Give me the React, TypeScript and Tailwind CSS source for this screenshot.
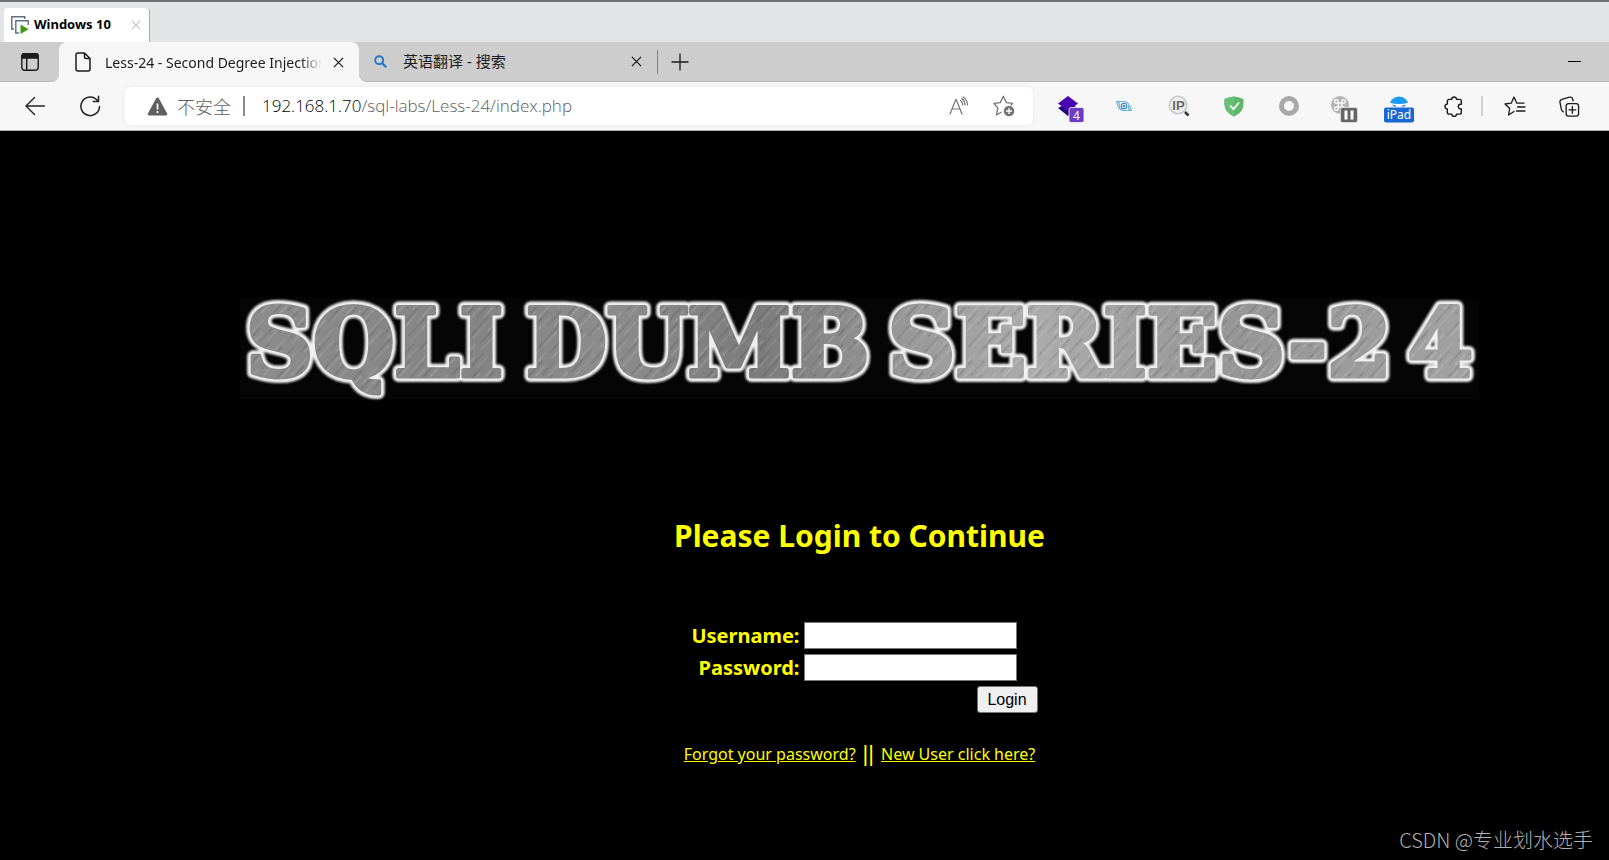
import type { ReactNode } from "react";

function IconButton({ label, className = "w-[55px]", children }: { label: string; className?: string; children: ReactNode }) {
  return (
    <button type="button" aria-label={label} className={`flex h-10 shrink-0 items-center justify-center ${className}`}>
      {children}
    </button>
  );
}

function CloseIcon({ className = "size-3" }: { className?: string }) {
  return (
    <svg viewBox="0 0 12 12" className={className} fill="none" stroke="currentColor" strokeWidth="1.4">
      <path d="M1 1l10 10M11 1L1 11" />
    </svg>
  );
}

function VmTabs() {
  return (
    <div className="flex h-[42px] items-end border-t-2 border-[#6d6f70] bg-[#e3e4e6] pl-1">
      <div className="flex h-[34px] w-[146px] items-center rounded-t border-r border-[#a9abad] bg-white pl-[7px]">
        <svg viewBox="0 0 18 18" className="size-[18px] shrink-0" fill="none">
          <path d="M3 13H.8V.8h13V3" stroke="#5d6d7e" strokeWidth="1.4" />
          <path d="M8 17H4.8V4.8h12.4V9" stroke="#5d6d7e" strokeWidth="1.4" />
          <path d="M9.5 8.500v9.500l8-4.700z" fill="#3f9c12" />
        </svg>
        <span className="ml-[5px] whitespace-nowrap font-['Noto_Sans',sans-serif] text-[13px] font-bold text-black">Windows 10</span>
        <button type="button" aria-label="Close Windows 10" className="ml-auto mr-1 p-1 text-[#bfc1c3]">
          <CloseIcon className="size-[10px]" />
        </button>
      </div>
    </div>
  );
}

function BrowserTabs() {
  return (
    <div className="flex h-10 bg-linear-to-b from-[#cdcdcd] from-50% to-[#f7f7f7] to-50% text-[15px] text-[#1b1b1b]">
      <div className="flex w-[59px] shrink-0 rounded-br-lg border-b border-[#b9b9b9] bg-[#cdcdcd]">
        <IconButton label="Tab actions" className="w-[60px]">
          <svg viewBox="0 0 18 18" className="size-[18px]" fill="none" stroke="currentColor" strokeWidth="1.4">
            <rect x=".8" y=".8" width="16.4" height="16.4" rx="2.6" />
            <path d="M1 2.500a2 2 0 0 1 2-1.700h12a2 2 0 0 1 2 1.700V5H1z" fill="currentColor" />
            <path d="M5.700 5v12" />
          </svg>
        </IconButton>
      </div>
      <div className="flex w-[300px] shrink-0 items-center rounded-t-lg bg-[#f7f7f7] pl-4">
        <svg viewBox="0 0 16 20" className="h-5 w-4 shrink-0" fill="none" stroke="currentColor" strokeWidth="1.500" strokeLinejoin="round">
          <path d="M3 1h6.500L15 6.500V17a2 2 0 0 1-2 2H3a2 2 0 0 1-2-2V3a2 2 0 0 1 2-2z" />
          <path d="M9.500 1v4a1.500 1.500 0 0 0 1.500 1.500h4" />
        </svg>
        <span className="ml-[14px] w-[217px] overflow-hidden whitespace-nowrap font-['Noto_Sans',sans-serif] text-[14px] mask-r-from-90% mask-r-to-100%">
          Less-24 - Second Degree Injections
        </span>
        <button type="button" aria-label="Close tab" className="ml-auto mr-[15px]">
          <CloseIcon className="size-[11px]" />
        </button>
      </div>
      <div className="flex min-w-0 flex-1 items-center rounded-bl-lg border-b border-[#b9b9b9] bg-[#cdcdcd] pl-[15px]">
        <svg viewBox="0 0 14 14" className="size-[13px] shrink-0" fill="none" stroke="#1c76cc" strokeWidth="2">
          <circle cx="5.600" cy="5.600" r="4.300" />
          <path d="M8.800 8.800l4.400 4.400" strokeWidth="2.400" />
        </svg>
        <span className="ml-4 w-[220px] whitespace-nowrap font-['Noto_Sans','Noto_Sans_CJK_SC',sans-serif] text-[15px]">英语翻译 - 搜索</span>
        <button type="button" aria-label="Close tab" className="ml-2">
          <CloseIcon className="size-[11px]" />
        </button>
        <span className="ml-[15px] h-6 w-px bg-[#858585]" />
        <button type="button" aria-label="New tab" className="ml-[13px]">
          <svg viewBox="0 0 18 18" className="size-[18px]" stroke="currentColor" strokeWidth="1.300">
            <path d="M9 .5v17M.5 9h17" />
          </svg>
        </button>
        <button type="button" aria-label="Minimize" className="ml-auto mr-7 py-3">
          <span className="block h-px w-[13px] bg-black" />
        </button>
      </div>
    </div>
  );
}

function AddressBar() {
  return (
    <div className="ml-2 flex h-[38px] min-w-0 flex-1 items-center rounded-md bg-white pl-[22px] pr-[7px] shadow-[0_0_4px_#e8e8e8]">
      <svg viewBox="0 0 20 19" className="h-[19px] w-[21px] shrink-0">
        <path d="M8.700 1.200a1.500 1.500 0 0 1 2.600 0l8.300 15.200a1.500 1.500 0 0 1-1.300 2.200H1.700a1.500 1.500 0 0 1-1.300-2.200z" fill="#5f5f5f" />
        <path d="M10 6.500v6" stroke="#fff" strokeWidth="1.700" />
        <circle cx="10" cy="15" r="1.100" fill="#fff" />
      </svg>
      <span className="ml-[9px] shrink-0 font-['Noto_Sans_CJK_SC',sans-serif] text-[18px] font-light text-[#5c5c5c]">不安全</span>
      <span className="ml-3 h-5 w-[2px] shrink-0 bg-[#8b8b8b]" />
      <span className="ml-[17px] min-w-0 flex-1 truncate font-['Open_Sans',sans-serif] text-[17px] font-light text-[#606060]">
        <span className="text-black">192.168.1.70</span>/sql-labs/Less-24/index.php
      </span>
      <IconButton label="Read aloud" className="w-[45px]">
        <svg viewBox="0 0 20 20" className="size-5" fill="none" stroke="#737373" strokeWidth="1.200" strokeLinecap="round">
          <path d="M1 18L6.800 3.500h.4L13 18M3 13h8" />
          <path d="M11.500 4.500q2.200 1.500 2.200 4.500M12.800 2.500q3.200 2.500 3.200 6.500M14 1q4.500 3 4.500 8" />
        </svg>
      </IconButton>
      <IconButton label="Add to favorites" className="w-[45px]">
        <svg viewBox="0 0 22 22" className="size-[22px]" fill="none" stroke="#737373" strokeWidth="1.300" strokeLinejoin="round">
          <path d="M8.500 17l-5 3 1.300-6.800L.9 8.400l6.300-.8L10.300 1.300l3.100 6.300 6.300.8-2 2" />
          <circle cx="16" cy="16" r="5.300" fill="#737373" stroke="none" />
          <path d="M16 13v6M13 16h6" stroke="#fff" />
        </svg>
      </IconButton>
    </div>
  );
}

function Extensions() {
  return (
    <div className="ml-2 flex shrink-0 items-center text-[#1b1b1b]">
      <IconButton label="Layers, 4 items">
        <svg viewBox="0 0 30 30" className="mt-1 size-[30px]">
          <path d="M4 15l10-5 10 5-10 8z" fill="#22007a" />
          <path d="M4 10.500L14 3l10 7.500L14 18z" fill="#4a02b5" />
          <rect x="15" y="14.500" width="15" height="15" rx="2" fill="#6b3cc4" stroke="#f7f7f7" strokeWidth=".8" />
          <text x="22.500" y="26.500" textAnchor="middle" fill="#fff" className="font-['Noto_Sans',sans-serif] text-[12px]">4</text>
        </svg>
      </IconButton>
      <IconButton label="Eye">
        <svg viewBox="0 0 18 14" className="h-[14px] w-[18px]" fill="none" stroke="#68b3e2" strokeWidth="1.100">
          <path d="M1.500 2.500h8q5 .5 7 9h-8Q3.500 11 1.500 2.500zM3 2.500q2 1.500 1.500 5M15 11.500q-2-1.500-1.500-5" />
          <circle cx="9" cy="7" r="2.800" fill="#dff1fc" stroke="#397fb6" />
          <circle cx="9" cy="7" r="1" fill="#25507c" stroke="none" />
        </svg>
      </IconButton>
      <IconButton label="IP lookup">
        <svg viewBox="0 0 22 22" className="size-[22px]">
          <circle cx="10" cy="10" r="8.700" fill="#ededed" stroke="#c2c9cd" strokeWidth="1.600" />
          <text x="10.500" y="14.500" textAnchor="middle" fill="#666" className="font-['Liberation_Sans',sans-serif] text-[13px] font-bold">IP</text>
          <path d="M17 17l3.500 3.500" stroke="#333" strokeWidth="2.500" />
        </svg>
      </IconButton>
      <IconButton label="Shield">
        <svg viewBox="0 0 20 21" className="h-[21px] w-5">
          <path d="M10 .5Q14 .7 19.500 3v5q0 8.500-9.500 12.500Q.5 16.500.5 8V3Q6 .7 10 .5z" fill="#5fb76b" />
          <path d="M10 .5V20.500Q.5 16.500.5 8V3Q6 .7 10 .5z" fill="#67c076" />
          <path d="M6 9.500l3.500 3.700L15 6.500" fill="none" stroke="#fff" strokeWidth="1.800" />
        </svg>
      </IconButton>
      <IconButton label="Recorder">
        <span className="size-5 rounded-full border-5 border-[#a9a9a9]" />
      </IconButton>
      <IconButton label="Command, paused">
        <svg viewBox="0 0 28 30" className="mt-1 h-[30px] w-7">
          <circle cx="10" cy="12" r="9" fill="#b4b4b4" />
          <path d="M8.200 10.200h3.600v3.600H8.200zM8.200 10.200H6.600A1.800 1.800 0 1 1 8.200 8.600zM11.800 10.200V8.600a1.800 1.800 0 1 1 1.600 1.600zM8.200 13.800v1.600a1.800 1.800 0 1 1-1.600-1.600zM11.800 13.800h1.600a1.800 1.800 0 1 1-1.600 1.600z" fill="none" stroke="#fff" strokeWidth="1.300" />
          <rect x="10.500" y="14.500" width="17" height="15" rx="2" fill="#666" stroke="#f7f7f7" strokeWidth=".6" />
          <path d="M16 17.500v9M22 17.500v9" stroke="#fff" strokeWidth="3" />
        </svg>
      </IconButton>
      <IconButton label="User agent">
        <svg viewBox="0 0 30 30" className="mt-1 size-[30px]">
          <path d="M5 14a10 10.500 0 0 1 20 0z" fill="#1c9bf5" />
          <path d="M5 9.500q10 3 20 0l1 6H4z" fill="#fff" />
          <path d="M8 11.500l5 1.500q-3 2-5-1.500zM22 11.500L17 13q3 2 5-1.500z" fill="#1c78d6" />
          <rect y="14.500" width="30" height="15" rx="2" fill="#1967d2" />
          <text x="15" y="26" textAnchor="middle" fill="#fff" className="font-['Noto_Sans',sans-serif] text-[12px]">iPad</text>
        </svg>
      </IconButton>
      <IconButton label="Extensions">
        <svg viewBox="0 0 21 22" className="h-[21px] w-5" fill="none" stroke="currentColor" strokeWidth="1.500" strokeLinejoin="round">
          <path d="M5.500 3.500h2.700a2.500 2.500 0 0 1 5 0h3a2 2 0 0 1 2 2v3.200h-.8a2.400 2.400 0 0 0 0 4.800h.8v3.500a2 2 0 0 1-2 2h-3a2.500 2.500 0 0 1-5 0H5.500a2 2 0 0 1-2-2v-3.500a2.500 2.500 0 0 1 0-5v-3a2 2 0 0 1 2-2z" />
        </svg>
      </IconButton>
      <span className="mr-1 h-5 w-[2px] bg-[#cfcfcf]" />
      <IconButton label="Favorites">
        <svg viewBox="0 0 22 20" className="h-5 w-[22px]" fill="none" stroke="currentColor" strokeWidth="1.300" strokeLinejoin="round" strokeLinecap="round">
          <path d="M10 15.500L4.500 19l1.200-6.500L1 8l6.200-.8L10 1l2.800 6.200H20M13.500 11H21M12.500 15H21" />
        </svg>
      </IconButton>
      <IconButton label="Collections">
        <svg viewBox="0 0 22 22" className="size-[21px]" fill="none" stroke="currentColor" strokeWidth="1.400" strokeLinecap="round">
          <rect x="7.500" y="8" width="13" height="13" rx="2.500" />
          <path d="M14 11v7M10.500 14.500h7M4.500 16.500q-1.500-.5-2-2.500L1 6.500Q.7 4.200 3 3.500l8-2.300q2.500-.5 3.200 1.500l.6 2.300" />
        </svg>
      </IconButton>
    </div>
  );
}

function Toolbar() {
  return (
    <div className="flex h-[49px] items-center border-b border-[#b5b5b5] bg-[#f7f7f7] pl-[7px] pr-3">
      <IconButton label="Back">
        <svg viewBox="0 0 20 20" className="size-5" fill="none" stroke="#222" strokeWidth="1.400" strokeLinecap="round">
          <path d="M9.500 1.500L1 10l8.500 8.500M1 10h18.500" />
        </svg>
      </IconButton>
      <IconButton label="Refresh">
        <svg viewBox="0 0 22 22" className="size-[22px]" fill="none" stroke="#222" strokeWidth="1.500" strokeLinecap="round">
          <path d="M20.500 11.500a9.300 9.300 0 1 1-3.300-7.300l1.800 1.800M19.500 1.200V6.500h-5.300" />
        </svg>
      </IconButton>
      <AddressBar />
      <Extensions />
    </div>
  );
}

function BannerWords(props: { fill: string; stroke?: string; strokeWidth?: number; filter?: string }) {
  return (
    <g {...props} strokeLinejoin="round" className="font-['DejaVu_Serif',serif] text-[93px] font-bold">
      <text x="6" y="78">SQLI</text>
      <text x="286" y="78">DUMB</text>
      <text x="648" y="78">SERIES-2</text>
      <text x="1168" y="78">4</text>
    </g>
  );
}

function Banner() {
  return (
    <svg viewBox="0 0 1239 101" role="img" aria-label="SQLI DUMB SERIES-24" className="w-full max-w-[1239px] overflow-visible bg-[#050505]">
      <defs>
        <linearGradient id="steel" x1="0" y1="0" x2="1239" y2="0" gradientUnits="userSpaceOnUse">
          <stop offset="0" stopColor="#8c8c8c" />
          <stop offset=".2" stopColor="#848484" />
          <stop offset=".3" stopColor="#8c8c8c" />
          <stop offset=".42" stopColor="#7b7b7b" />
          <stop offset=".52" stopColor="#949494" />
          <stop offset=".64" stopColor="#ababab" />
          <stop offset=".8" stopColor="#959595" />
          <stop offset="1" stopColor="#a2a2a2" />
        </linearGradient>
        <pattern id="brushed" width="29" height="41" patternUnits="userSpaceOnUse" patternTransform="rotate(42)">
          <path d="M3 0v23M11 10v31M20 0v16M26 18v20" stroke="#fff" strokeOpacity=".14" />
          <path d="M6 8v30M15 0v19M23 12v29" stroke="#000" strokeOpacity=".12" />
        </pattern>
        <filter id="glow" x="-5%" y="-30%" width="110%" height="160%">
          <feGaussianBlur stdDeviation="1.200" />
        </filter>
      </defs>
      <BannerWords fill="#fff" stroke="#f0f0f0" strokeWidth={12} filter="url(#glow)" />
      <g aria-hidden="true">
        <BannerWords fill="url(#steel)" stroke="url(#steel)" strokeWidth={5} />
        <BannerWords fill="url(#brushed)" stroke="url(#brushed)" strokeWidth={5} />
      </g>
    </svg>
  );
}

function LoginForm() {
  return (
    <form className="mt-[65px] flex w-[356px] flex-col gap-[5px] text-[20px] font-bold leading-[27px]" onSubmit={(e) => e.preventDefault()}>
      <div className="grid grid-cols-[118px_213px] gap-x-1 gap-y-[5px]">
        <label htmlFor="username" className="text-right">Username:</label>
        <input id="username" type="text" className="h-[27px] border border-[#767676] bg-white px-1 text-base font-normal text-black" />
        <label htmlFor="password" className="text-right">Password:</label>
        <input id="password" type="password" className="h-[27px] border border-[#767676] bg-white px-1 text-base font-normal text-black" />
      </div>
      <button type="submit" className="h-[27px] w-[61px] self-end rounded-[3px] border border-[#767676] bg-[#efefef] font-['Liberation_Sans',sans-serif] text-[16px] leading-6 font-normal text-black">
        Login
      </button>
    </form>
  );
}

export default function App() {
  return (
    <div className="relative flex min-h-screen flex-col bg-black">
      <header>
        <VmTabs />
        <BrowserTabs />
        <Toolbar />
      </header>
      <main className="flex flex-1 flex-col items-center pl-[110px] pt-[167px] font-['Noto_Sans',sans-serif] text-[#ffff00]">
        <Banner />
        <h1 className="mt-[116px] text-[30px] font-bold leading-[42px]">Please Login to Continue</h1>
        <LoginForm />
        <p className="mt-[25px] flex items-center gap-[7px] text-[16px] leading-[32px]">
          <a href="#forgot" className="underline">Forgot your password?</a>
          <span className="font-['Liberation_Sans',sans-serif] text-[22px]">||</span>
          <a href="#register" className="underline">New User click here?</a>
        </p>
      </main>
      <div className="absolute bottom-1 right-4 whitespace-nowrap font-['Noto_Sans_CJK_SC',sans-serif] text-[20px] leading-8 font-light text-[#b0b0b0]">
        CSDN @专业划水选手
      </div>
    </div>
  );
}
